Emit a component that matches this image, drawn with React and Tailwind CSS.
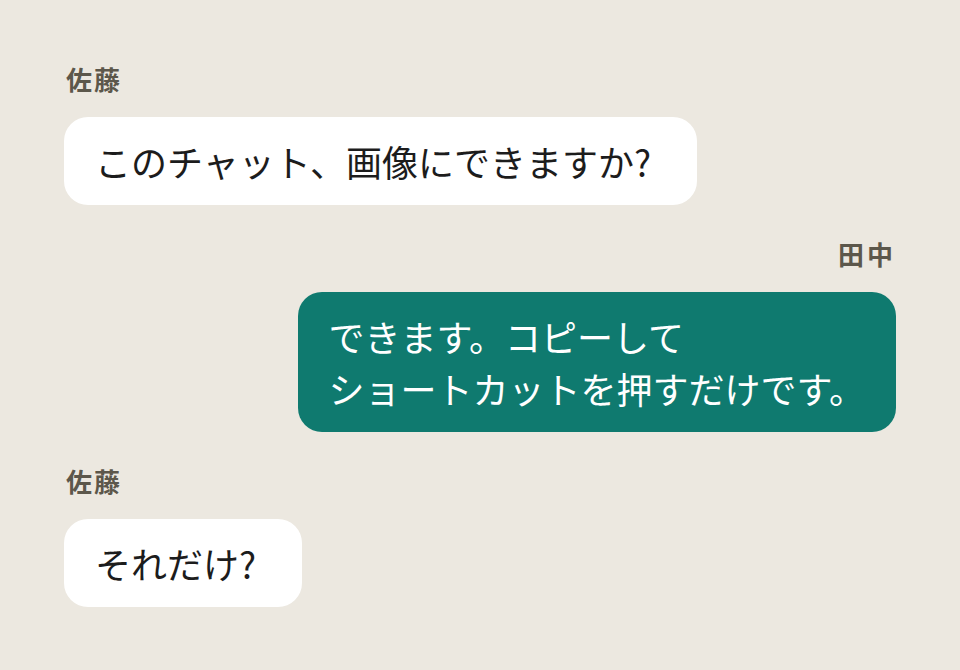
export default function App() {
  return (
    <div className="w-[960px] h-[670px] bg-[#ece8e0] px-16 pt-16 flex flex-col gap-[34px] font-['Noto_Sans_CJK_JP','Noto_Sans',sans-serif] overflow-hidden">
      <div className="flex flex-col items-start">
        <div className="text-[26px] leading-[30px] font-bold text-[#5c574b] tracking-[2px] mb-[23px] ml-[2px]">佐藤</div>
        <div className="bg-white rounded-3xl pl-[31px] pr-[46px] py-[18px] text-[36px] leading-[52px] text-[#1c1c1c]">
          このチャット、画像にできますか?
        </div>
      </div>
      <div className="flex flex-col items-end">
        <div className="text-[26px] leading-[30px] font-bold text-[#5c574b] tracking-[3px] mb-[23px]">田中</div>
        <div className="bg-[#0f7a6f] rounded-3xl pl-[31px] pr-[31px] py-[18px] text-[36px] leading-[52px] text-white">
          できます。コピーして
          <br />
          ショートカットを押すだけです。
        </div>
      </div>
      <div className="flex flex-col items-start">
        <div className="text-[26px] leading-[30px] font-bold text-[#5c574b] tracking-[2px] mb-[23px] ml-[2px]">佐藤</div>
        <div className="bg-white rounded-3xl pl-[31px] pr-[46px] py-[18px] text-[36px] leading-[52px] text-[#1c1c1c]">
          それだけ?
        </div>
      </div>
    </div>
  );
}
